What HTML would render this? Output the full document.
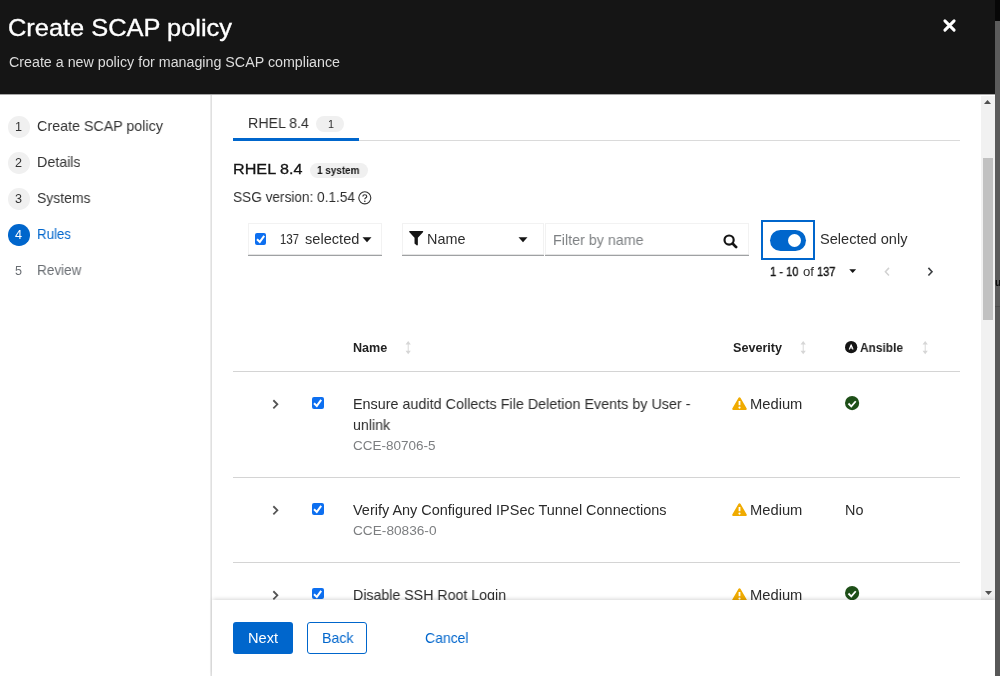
<!DOCTYPE html>
<html lang="en">
<head>
<meta charset="utf-8">
<title>Create SCAP policy</title>
<style>
*{box-sizing:border-box;margin:0;padding:0}
html,body{width:1000px;height:676px;overflow:hidden;background:#5b5b5b;font-family:"Liberation Sans",sans-serif;color:#151515}
.abs{position:absolute}
.t{position:absolute;white-space:pre;line-height:1;will-change:transform;transform-origin:0 0}
svg{position:absolute;overflow:visible}
#modal{left:0;top:0;width:995px;height:676px;background:#fff;overflow:hidden}
#hdr{left:0;top:0;width:995px;height:94px;background:#151515}
.num{position:absolute;left:8.1px;width:21.6px;height:21.6px;border-radius:50%;background:#f0f0f0}
.hline{position:absolute;left:233px;width:727px;height:1px;background:#d4d4d4}
.box{position:absolute;top:223px;height:31px;border:1px solid #f2f2f2;border-bottom:0;background:#fff}
.box::after{content:'';position:absolute;left:-1px;right:-1px;top:100%;height:2px;background:linear-gradient(#e4e4e4 50%,#9fa1a3 50%)}
.btn{position:absolute;top:622px;height:32px;border-radius:3px}
.cb{position:absolute;width:11.8px;height:11.8px;border-radius:2px;background:#0d6ff0}
.badge{position:absolute;background:#f0f0f0;border-radius:30px}
</style>
</head>
<body>
<div class="abs" style="left:995px;top:0;width:5px;height:21px;background:#070707"></div>
<div class="abs" style="left:995px;top:306px;width:5px;height:370px;background:#585858"></div>
<span class="t" style="left:995px;top:278px;font-size:10px;color:#0c0c0c;font-weight:700">u</span>
<div class="abs" style="left:995px;top:306px;width:5px;height:1px;background:#4c4c4c"></div>
<div class="abs" id="modal">
<div class="abs" id="hdr">
<span class="t" style="left:8.0px;top:15.96px;font-size:24.5px;color:#fff;transform:scaleX(1.0367);-webkit-text-stroke:.35px #fff;">Create SCAP policy</span>
<span class="t" style="left:8.5px;top:55.15px;font-size:14px;color:#dcdcdc;transform:scaleX(1.0184);">Create a new policy for managing SCAP compliance</span>
<svg style="left:943px;top:19px" width="13" height="13" viewBox="0 0 13 13"><path d="M1.9 1.9 L11.1 11.1 M11.1 1.9 L1.9 11.1" stroke="#fff" stroke-width="3" stroke-linecap="round"/></svg>
</div>
<div class="abs" style="left:0;top:94px;width:995px;height:1px;background:#a6a6a6"></div>
<div class="abs" style="left:210px;top:95px;width:2px;height:581px;background:linear-gradient(to right,#ececec 50%,#e0e0e0 50%)"></div>
<div class="num" style="top:116.1px;background:#f0f0f0"></div>
<span class="t" style="left:15.3px;top:120.73px;font-size:12.6px;color:#333;">1</span>
<span class="t" style="left:37.0px;top:118.91px;font-size:14.4px;color:#333;transform:scaleX(0.9927);">Create SCAP policy</span>
<div class="num" style="top:152.1px;background:#f0f0f0"></div>
<span class="t" style="left:15.3px;top:156.73px;font-size:12.6px;color:#333;">2</span>
<span class="t" style="left:37.0px;top:154.91px;font-size:14.4px;color:#333;transform:scaleX(0.9886);">Details</span>
<div class="num" style="top:188.1px;background:#f0f0f0"></div>
<span class="t" style="left:15.3px;top:192.73px;font-size:12.6px;color:#333;">3</span>
<span class="t" style="left:37.0px;top:190.91px;font-size:14.4px;color:#333;transform:scaleX(0.9694);">Systems</span>
<div class="num" style="top:224.1px;background:#06c"></div>
<span class="t" style="left:15.3px;top:228.73px;font-size:12.6px;color:#fff;">4</span>
<span class="t" style="left:37.0px;top:226.91px;font-size:14.4px;color:#06c;transform:scaleX(0.9240);">Rules</span>
<div class="num" style="top:260.1px;background:#fff"></div>
<span class="t" style="left:15.3px;top:264.73px;font-size:12.6px;color:#6a6e73;">5</span>
<span class="t" style="left:37.0px;top:262.91px;font-size:14.4px;color:#6a6e73;transform:scaleX(0.9409);">Review</span>
<span class="t" style="left:247.5px;top:115.81px;font-size:14.4px;color:#2e2e2e;transform:scaleX(0.9861);">RHEL 8.4</span>
<div class="badge" style="left:316.2px;top:116.4px;width:28px;height:15.6px"></div>
<span class="t" style="left:327.6px;top:119.06px;font-size:10.8px;color:#2e2e2e;">1</span>
<div class="hline" style="top:140px;background:#dadada"></div>
<div class="abs" style="left:233px;top:138px;width:126px;height:3.2px;background:#06c"></div>
<span class="t" style="left:233.0px;top:161.61px;font-size:14.4px;color:#151515;transform:scaleX(1.1235);-webkit-text-stroke:.3px #151515;">RHEL 8.4</span>
<div class="badge" style="left:309.5px;top:162.5px;width:58px;height:15.5px"></div>
<span class="t" style="left:317.0px;top:164.96px;font-size:10.8px;color:#151515;font-weight:700;transform:scaleX(0.9192);">1 system</span>
<span class="t" style="left:233.0px;top:190.31px;font-size:14.4px;color:#2e2e2e;transform:scaleX(0.9472);">SSG version: 0.1.54</span>
<svg style="left:358.4px;top:190.9px" width="13.6" height="13.6" viewBox="0 0 14 14"><circle cx="7" cy="7" r="6.2" fill="none" stroke="#333" stroke-width="1.15"/><path d="M5 5.6 C5 3.3 9 3.3 9 5.6 C9 7 7 7 7 8.6" fill="none" stroke="#333" stroke-width="1.25"/><circle cx="7" cy="10.6" r=".85" fill="#333"/></svg>
<div class="box" style="left:247.5px;width:134.5px"></div>
<div class="cb" style="left:254.7px;top:232.9px"></div>
<svg style="left:254.7px;top:232.9px" width="12" height="12" viewBox="0 0 12 12"><path d="M2 6.2 L4.8 8.9 L9.2 2.9" fill="none" stroke="#fff" stroke-width="2"/></svg>
<span class="t" style="left:280.4px;top:232.31px;font-size:14.4px;color:#2e2e2e;transform:scaleX(0.7912);">137</span>
<span class="t" style="left:304.6px;top:232.31px;font-size:14.4px;color:#2e2e2e;transform:scaleX(1.0147);">selected</span>
<svg style="left:362px;top:237px" width="10" height="6" viewBox="0 0 10 6"><path d="M0.5 0.3 H9.5 L5 5.2 Z" fill="#151515"/></svg>
<div class="box" style="left:402px;width:141.5px"></div>
<svg style="left:409.4px;top:231.1px" width="14.4" height="14.5" viewBox="0 0 13 13" preserveAspectRatio="none"><path d="M0.6 0 H12.4 Q13.3 0.3 12.6 1.2 L8 6 V12.4 Q7.6 13.3 6.9 12.8 L5.2 11.5 Q5 11.3 5 10.9 V6 L0.4 1.2 Q-0.3 0.3 0.6 0 Z" fill="#151515"/></svg>
<span class="t" style="left:427.2px;top:232.31px;font-size:14.4px;color:#2e2e2e;transform:scaleX(0.9976);">Name</span>
<svg style="left:518px;top:237px" width="10" height="6" viewBox="0 0 10 6"><path d="M0.5 0.3 H9.5 L5 5.2 Z" fill="#151515"/></svg>
<div class="box" style="left:544.5px;width:204px"></div>
<span class="t" style="left:552.5px;top:232.61px;font-size:14.4px;color:#7d8083;transform:scaleX(0.9926);">Filter by name</span>
<svg style="left:723.2px;top:233.6px" width="15" height="15" viewBox="0 0 16 16"><circle cx="6.5" cy="6.5" r="4.9" fill="none" stroke="#151515" stroke-width="2.3"/><path d="M10.2 10.2 L14 14" stroke="#151515" stroke-width="2.9" stroke-linecap="round"/></svg>
<div class="abs" style="left:761px;top:220px;width:54px;height:40px;border:2px solid #06c"></div>
<div class="abs" style="left:769.7px;top:229.5px;width:36px;height:21.6px;border-radius:11px;background:#06c"></div>
<div class="abs" style="left:788px;top:233.7px;width:13.2px;height:13.2px;border-radius:50%;background:#fff"></div>
<span class="t" style="left:820.0px;top:232.31px;font-size:14.4px;color:#2e2e2e;transform:scaleX(1.0127);">Selected only</span>
<span class="t" style="left:770.4px;top:265.73px;font-size:12.6px;color:#151515;transform:scaleX(0.8815);-webkit-text-stroke:.4px #151515;">1 - 10</span>
<span class="t" style="left:802.8px;top:265.73px;font-size:12.6px;color:#2e2e2e;transform:scaleX(1.0461);">of</span>
<span class="t" style="left:816.6px;top:265.73px;font-size:12.6px;color:#151515;transform:scaleX(0.8755);-webkit-text-stroke:.4px #151515;">137</span>
<svg style="left:848.8px;top:269.3px" width="7.4" height="4.4" viewBox="0 0 9 5"><path d="M0.3 0.2 H8.7 L4.5 4.8 Z" fill="#151515"/></svg>
<svg style="left:884.3px;top:266.6px" width="6.4" height="9.4" viewBox="0 0 7 11"><path d="M5.6 1 L1.4 5.5 L5.6 10" fill="none" stroke="#d2d2d2" stroke-width="1.8"/></svg>
<svg style="left:927.4px;top:266.6px" width="6.4" height="9.4" viewBox="0 0 7 11"><path d="M1.4 1 L5.6 5.5 L1.4 10" fill="none" stroke="#3c3f42" stroke-width="1.9"/></svg>
<span class="t" style="left:353.0px;top:341.53px;font-size:12.6px;color:#222;font-weight:700;transform:scaleX(0.9909);">Name</span>
<svg style="left:404.9px;top:340.8px" width="6.4" height="13.2" viewBox="0 0 7 13" preserveAspectRatio="none"><path d="M3.5 0 L6.4 3.4 H4 V9.6 H6.4 L3.5 13 L0.6 9.6 H3 V3.4 H0.6 Z" fill="#d6d6d6"/></svg>
<span class="t" style="left:732.5px;top:341.53px;font-size:12.6px;color:#222;font-weight:700;transform:scaleX(0.9956);">Severity</span>
<svg style="left:800.2px;top:340.8px" width="6.4" height="13.2" viewBox="0 0 7 13" preserveAspectRatio="none"><path d="M3.5 0 L6.4 3.4 H4 V9.6 H6.4 L3.5 13 L0.6 9.6 H3 V3.4 H0.6 Z" fill="#d6d6d6"/></svg>
<svg style="left:845.3px;top:340.9px" width="12.3" height="12.3" viewBox="0 0 12 12"><circle cx="6" cy="6" r="6" fill="#151515"/><path d="M4.1 8.3 L6 3.6 L7.9 8.3 M4.8 6.8 H7.2" fill="none" stroke="#fff" stroke-width="1" stroke-linejoin="round"/></svg>
<span class="t" style="left:860.0px;top:341.53px;font-size:12.6px;color:#222;font-weight:700;transform:scaleX(0.9451);">Ansible</span>
<svg style="left:921.5px;top:340.8px" width="6.4" height="13.2" viewBox="0 0 7 13" preserveAspectRatio="none"><path d="M3.5 0 L6.4 3.4 H4 V9.6 H6.4 L3.5 13 L0.6 9.6 H3 V3.4 H0.6 Z" fill="#d6d6d6"/></svg>
<div class="hline" style="top:371px"></div>
<div class="abs" style="left:212px;top:372px;width:783px;height:228px;overflow:hidden">
<div class="abs" style="left:-212px;top:-372px;width:995px;height:676px">
<svg style="left:271.7px;top:398.5px" width="7.2" height="10.6" viewBox="0 0 8 11"><path d="M1.5 1 L6 5.5 L1.5 10" fill="none" stroke="#555" stroke-width="2"/></svg>
<div class="cb" style="left:312px;top:397px"></div><svg style="left:312px;top:397px" width="12" height="12" viewBox="0 0 12 12"><path d="M2 6.2 L4.8 8.9 L9.2 2.9" fill="none" stroke="#fff" stroke-width="2"/></svg>
<span class="t" style="left:353.0px;top:396.91px;font-size:14.4px;color:#2b2b2b;transform:scaleX(0.9976);">Ensure auditd Collects File Deletion Events by User -</span>
<span class="t" style="left:353.0px;top:418.11px;font-size:14.4px;color:#2b2b2b;transform:scaleX(0.9838);">unlink</span>
<span class="t" style="left:353.0px;top:439.73px;font-size:12.6px;color:#7c7e80;transform:scaleX(1.0712);">CCE-80706-5</span>
<svg style="left:732.2px;top:397px" width="15" height="13" viewBox="0 0 15 13"><path d="M7.5 0.3 Q8.2 0.3 8.6 1 L14.7 11.4 Q15.2 12.8 13.8 13 H1.2 Q-0.2 12.8 0.3 11.4 L6.4 1 Q6.8 0.3 7.5 0.3 Z" fill="#f0ab00"/><path d="M7.5 4 V8.2" stroke="#fff" stroke-width="1.8"/><circle cx="7.5" cy="10.6" r="1.1" fill="#fff"/></svg>
<span class="t" style="left:749.6px;top:397.41px;font-size:14.4px;color:#2b2b2b;transform:scaleX(1.0237);">Medium</span>
<svg style="left:845.3px;top:395.6px" width="14.2" height="14.2" viewBox="0 0 14 14"><circle cx="7" cy="7" r="7" fill="#1e4f18"/><path d="M3.4 7.4 L6.2 10.2 L10.6 5.2" fill="none" stroke="#fff" stroke-width="1.8"/></svg>
<div class="hline" style="top:477px"></div>
<svg style="left:271.7px;top:505px" width="7.2" height="10.6" viewBox="0 0 8 11"><path d="M1.5 1 L6 5.5 L1.5 10" fill="none" stroke="#555" stroke-width="2"/></svg>
<div class="cb" style="left:312px;top:503px"></div><svg style="left:312px;top:503px" width="12" height="12" viewBox="0 0 12 12"><path d="M2 6.2 L4.8 8.9 L9.2 2.9" fill="none" stroke="#fff" stroke-width="2"/></svg>
<span class="t" style="left:353.0px;top:503.41px;font-size:14.4px;color:#2b2b2b;transform:scaleX(1.0049);">Verify Any Configured IPSec Tunnel Connections</span>
<span class="t" style="left:353.0px;top:525.13px;font-size:12.6px;color:#7c7e80;transform:scaleX(1.0842);">CCE-80836-0</span>
<svg style="left:732.2px;top:503px" width="15" height="13" viewBox="0 0 15 13"><path d="M7.5 0.3 Q8.2 0.3 8.6 1 L14.7 11.4 Q15.2 12.8 13.8 13 H1.2 Q-0.2 12.8 0.3 11.4 L6.4 1 Q6.8 0.3 7.5 0.3 Z" fill="#f0ab00"/><path d="M7.5 4 V8.2" stroke="#fff" stroke-width="1.8"/><circle cx="7.5" cy="10.6" r="1.1" fill="#fff"/></svg>
<span class="t" style="left:749.6px;top:503.21px;font-size:14.4px;color:#2b2b2b;transform:scaleX(1.0237);">Medium</span>
<span class="t" style="left:845.0px;top:503.21px;font-size:14.4px;color:#2b2b2b;transform:scaleX(0.9779);">No</span>
<div class="hline" style="top:562px"></div>
<svg style="left:271.7px;top:589.5px" width="7.2" height="10.6" viewBox="0 0 8 11"><path d="M1.5 1 L6 5.5 L1.5 10" fill="none" stroke="#555" stroke-width="2"/></svg>
<div class="cb" style="left:312px;top:587.5px"></div><svg style="left:312px;top:587.5px" width="12" height="12" viewBox="0 0 12 12"><path d="M2 6.2 L4.8 8.9 L9.2 2.9" fill="none" stroke="#fff" stroke-width="2"/></svg>
<span class="t" style="left:353.0px;top:587.51px;font-size:14.4px;color:#2b2b2b;transform:scaleX(0.9859);">Disable SSH Root Login</span>
<svg style="left:732.2px;top:587.5px" width="15" height="13" viewBox="0 0 15 13"><path d="M7.5 0.3 Q8.2 0.3 8.6 1 L14.7 11.4 Q15.2 12.8 13.8 13 H1.2 Q-0.2 12.8 0.3 11.4 L6.4 1 Q6.8 0.3 7.5 0.3 Z" fill="#f0ab00"/><path d="M7.5 4 V8.2" stroke="#fff" stroke-width="1.8"/><circle cx="7.5" cy="10.6" r="1.1" fill="#fff"/></svg>
<span class="t" style="left:749.6px;top:588.01px;font-size:14.4px;color:#2b2b2b;transform:scaleX(1.0237);">Medium</span>
<svg style="left:845.3px;top:586px" width="14.2" height="14.2" viewBox="0 0 14 14"><circle cx="7" cy="7" r="7" fill="#1e4f18"/><path d="M3.4 7.4 L6.2 10.2 L10.6 5.2" fill="none" stroke="#fff" stroke-width="1.8"/></svg>
</div></div>
<div class="abs" style="left:981px;top:96px;width:14px;height:503.5px;background:#f1f1f1"></div>
<div class="abs" style="left:983px;top:158px;width:10px;height:162px;background:#c1c1c1"></div>
<svg style="left:984.2px;top:100px" width="7" height="4" viewBox="0 0 7 4"><path d="M0 4 L3.5 0 L7 4 Z" fill="#505050"/></svg>
<svg style="left:984.5px;top:591px" width="7" height="4" viewBox="0 0 7 4"><path d="M0 0 L3.5 4 L7 0 Z" fill="#505050"/></svg>
<div class="abs" style="left:212px;top:599.5px;width:783px;height:76.5px;background:#fff;box-shadow:0 -2px 4px -1px rgba(3,3,3,.16)"></div>
<div class="btn" style="left:233px;width:59.5px;background:#06c"></div>
<span class="t" style="left:248.0px;top:630.81px;font-size:14.4px;color:#fff;transform:scaleX(1.0137);">Next</span>
<div class="btn" style="left:307px;width:60px;border:1px solid #06c;background:#fff"></div>
<span class="t" style="left:321.5px;top:630.81px;font-size:14.4px;color:#06c;transform:scaleX(0.9844);">Back</span>
<span class="t" style="left:424.8px;top:630.81px;font-size:14.4px;color:#06c;transform:scaleX(0.9710);">Cancel</span>
</div>
</body>
</html>
